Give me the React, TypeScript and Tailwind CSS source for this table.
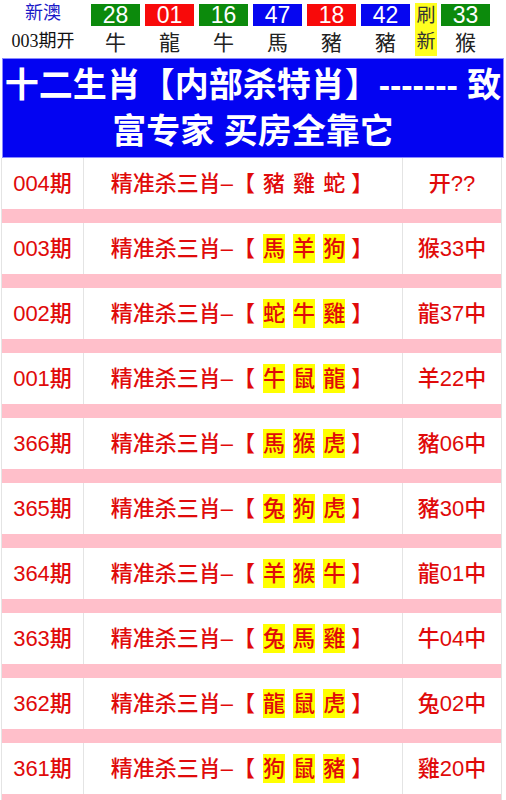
import React from "react";

type Ball = { num: string; sx: string; color: string };

const balls: Ball[] = [
  { num: "28", sx: "牛", color: "bg-[#0c8a0c]" },
  { num: "01", sx: "龍", color: "bg-[#f80a0a]" },
  { num: "16", sx: "牛", color: "bg-[#0c8a0c]" },
  { num: "47", sx: "馬", color: "bg-[#0606f0]" },
  { num: "18", sx: "豬", color: "bg-[#f80a0a]" },
  { num: "42", sx: "豬", color: "bg-[#0606f0]" },
];

type Row = { qi: string; kill: string[]; result: string; hl: boolean };

const rows: Row[] = [
  { qi: "004期", kill: ["豬", "雞", "蛇"], result: "开??", hl: false },
  { qi: "003期", kill: ["馬", "羊", "狗"], result: "猴33中", hl: true },
  { qi: "002期", kill: ["蛇", "牛", "雞"], result: "龍37中", hl: true },
  { qi: "001期", kill: ["牛", "鼠", "龍"], result: "羊22中", hl: true },
  { qi: "366期", kill: ["馬", "猴", "虎"], result: "豬06中", hl: true },
  { qi: "365期", kill: ["兔", "狗", "虎"], result: "豬30中", hl: true },
  { qi: "364期", kill: ["羊", "猴", "牛"], result: "龍01中", hl: true },
  { qi: "363期", kill: ["兔", "馬", "雞"], result: "牛04中", hl: true },
  { qi: "362期", kill: ["龍", "鼠", "虎"], result: "兔02中", hl: true },
  { qi: "361期", kill: ["狗", "鼠", "豬"], result: "雞20中", hl: true },
];

const sans = "font-['Liberation_Sans','Noto_Sans_CJK_SC',sans-serif]";

function BallCell({ b }: { b: Ball }) {
  return (
    <div className="flex w-[49px] flex-col items-center">
      <div className={`${b.color} h-[22px] w-full text-center text-[23px] leading-[23px] text-white`}>{b.num}</div>
      <div className="mt-[4px] text-[21px] leading-[26px] text-[#222]">{b.sx}</div>
    </div>
  );
}

function KillRow({ r }: { r: Row }) {
  return (
    <>
      <div className="grid h-[51px] grid-cols-[82px_319px_1fr] items-center text-[22px] font-medium text-[#e00a0a]">
        <div className="flex h-full items-center justify-center border-r border-[#e4e4e4]">{r.qi}</div>
        <div className="flex h-full items-center justify-center border-r border-[#e4e4e4] pr-[2px]">
          <span>精准杀三肖–【</span>
          {r.kill.map((k) => (
            <span key={k} className="ml-[8px]">
              <span className={r.hl ? "bg-[#ffff00] py-[2px]" : ""}>{k}</span>
            </span>
          ))}
          <span className="ml-[6px]">】</span>
        </div>
        <div className="flex h-full items-center justify-center">{r.result}</div>
      </div>
      <div className="h-[14px] bg-[#ffbfca]" />
    </>
  );
}

export default function App() {
  return (
    <div className={`w-[506px] bg-white ${sans}`}>
      {/* top draw bar */}
      <div className="flex h-[58px]">
        <div className="flex w-[86px] flex-col items-center pt-[1px]">
          <div className="text-[18px] leading-[24px] text-[#1a1ac8]">新澳</div>
          <div className="mt-[4px] text-[18px] leading-[24px] text-[#111]">
            <span className="font-['Liberation_Serif','Noto_Sans_CJK_SC',serif]">003</span>期开
          </div>
        </div>
        <div className="flex gap-[5px] pt-[4px] pl-[5px]">
          {balls.map((b, i) => (
            <BallCell key={i} b={b} />
          ))}
        </div>
        <div className="mt-[3px] ml-[5px] flex h-[53px] w-[22px] flex-col items-center bg-[#ffff20] text-[19px] leading-[26px] text-[#333]">
          <span>刷</span>
          <span>新</span>
        </div>
        <div className="ml-[4px] pt-[4px]">
          <BallCell b={{ num: "33", sx: "猴", color: "bg-[#0c8a0c]" }} />
        </div>
      </div>

      {/* banner */}
      <div className="mx-[2px] border border-[#8a8aff] bg-[#0303f2] py-[3px] text-center text-[34px] font-bold leading-[46px] text-white">
        <div className="whitespace-nowrap">十二生肖【内部杀特肖】------- 致</div>
        <div>富专家 买房全靠它</div>
      </div>

      {/* kill list */}
      <div className="ml-[1px] w-[501px] border-l border-r border-[#e4e4e4]">
        {rows.map((r) => (
          <KillRow key={r.qi} r={r} />
        ))}
      </div>
    </div>
  );
}
